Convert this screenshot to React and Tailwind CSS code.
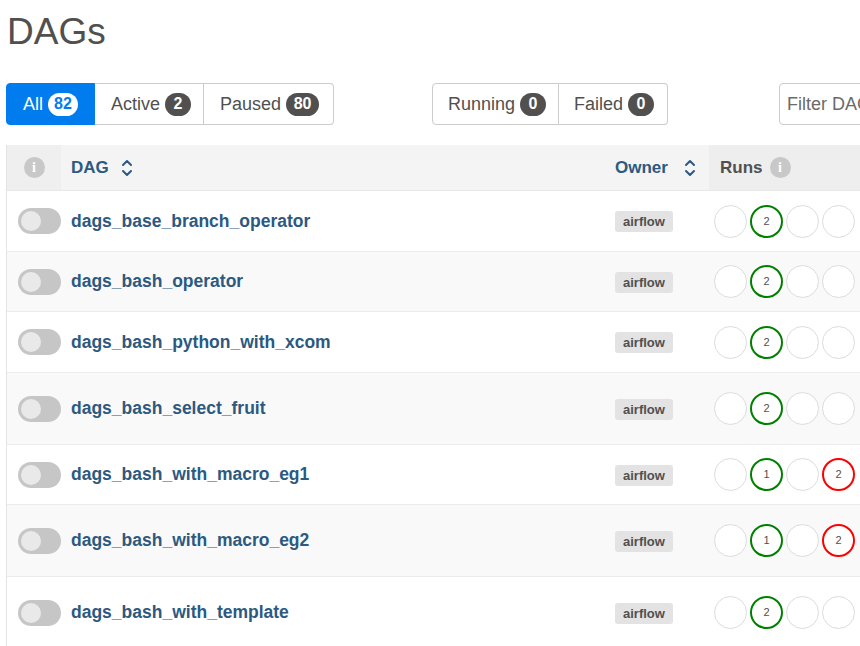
import React from "react";

const rows = [
  { name: "dags_base_branch_operator", h: "h-[61px]", runs: [null, ["g", 2], null, null] },
  { name: "dags_bash_operator", h: "h-[60px]", runs: [null, ["g", 2], null, null] },
  { name: "dags_bash_python_with_xcom", h: "h-[61px]", runs: [null, ["g", 2], null, null] },
  { name: "dags_bash_select_fruit", h: "h-[72px]", runs: [null, ["g", 2], null, null] },
  { name: "dags_bash_with_macro_eg1", h: "h-[60px]", runs: [null, ["g", 1], null, ["r", 2]] },
  { name: "dags_bash_with_macro_eg2", h: "h-[72px]", runs: [null, ["g", 1], null, ["r", 2]] },
  { name: "dags_bash_with_template", h: "h-[72px]", runs: [null, ["g", 2], null, null] },
];

function InfoIcon() {
  return (
    <span className="inline-flex items-center justify-center w-[21px] h-[21px] rounded-full bg-[#c8c8c8] text-white text-[14px] font-bold leading-none font-['Liberation_Serif',serif]">
      i
    </span>
  );
}

function SortIcon() {
  return (
    <svg width="12" height="20" viewBox="0 0 12 20" fill="none" stroke="#2d5981" strokeWidth="2" strokeLinecap="round" strokeLinejoin="round">
      <path d="M2 7 L6 3 L10 7" />
      <path d="M2 13 L6 17 L10 13" />
    </svg>
  );
}

function Toggle() {
  return (
    <div className="w-[43px] h-[26px] rounded-full bg-[#c6c6c6] flex items-center pl-[3px]">
      <div className="w-[20px] h-[20px] rounded-full bg-[#e9e9e9]"></div>
    </div>
  );
}

function Run({ r }) {
  if (!r) {
    return <div className="w-[33px] h-[33px] rounded-full border-[1.5px] border-[#dcdcdc] bg-white"></div>;
  }
  const border = r[0] === "g" ? "border-[#008000]" : "border-[#ff0000]";
  return (
    <div className={"w-[33px] h-[33px] rounded-full border-[2.5px] bg-white flex items-center justify-center text-[11px] text-[#51504f] " + border}>
      {r[1]}
    </div>
  );
}

function Badge({ children, light }) {
  return (
    <span
      className={
        "inline-flex items-center justify-center h-[23px] min-w-[26px] px-[8px] rounded-full text-[16px] font-bold leading-none " +
        (light ? "bg-white text-[#017cee]" : "bg-[#51504f] text-white")
      }
    >
      {children}
    </span>
  );
}

export default function App() {
  return (
    <div className="w-[860px] h-[646px] overflow-hidden bg-white font-['Liberation_Sans',Arial,sans-serif] text-[#51504f]">
      <div className="w-[1100px] pl-[6px]">
        <h2 className="text-[37px] leading-none pt-[13px] pl-[1px] h-[83px]">DAGs</h2>

        <div className="flex items-center h-[42px]">
          <div className="flex h-[42px] text-[18px]">
            <div className="flex items-center gap-[5px] px-[16px] bg-[#017cee] text-white rounded-l-[4px] border border-[#017cee] w-[89px]">
              <span>All</span>
              <Badge light>82</Badge>
            </div>
            <div className="flex items-center gap-[5px] pl-[16px] pr-[13px] border-y border-r border-[#cccccc] w-[109px]">
              <span>Active</span>
              <Badge>2</Badge>
            </div>
            <div className="flex items-center gap-[5px] pl-[16px] pr-[14px] border-y border-r border-[#cccccc] rounded-r-[4px] w-[130px]">
              <span>Paused</span>
              <Badge>80</Badge>
            </div>
          </div>

          <div className="flex h-[42px] text-[18px] ml-[98px]">
            <div className="flex items-center gap-[5px] pl-[15px] pr-[13px] border border-[#cccccc] rounded-l-[4px] w-[127px]">
              <span>Running</span>
              <Badge>0</Badge>
            </div>
            <div className="flex items-center gap-[5px] pl-[15px] pr-[13px] border-y border-r border-[#cccccc] rounded-r-[4px] w-[109px]">
              <span>Failed</span>
              <Badge>0</Badge>
            </div>
          </div>

          <div className="ml-[111px] h-[42px] w-[260px] border border-[#cccccc] rounded-[4px] flex items-center pl-[7px] text-[18px] text-[#6b6a69]">
            Filter DAGs
          </div>
        </div>

        <div className="mt-[20px] border-l border-[#e4e4e4]">
          <div className="flex h-[46px] bg-[#f4f4f4] border-b border-[#e8e8e8] text-[17px] font-bold">
            <div className="w-[54px] bg-[#efefef] flex items-center justify-center">
              <InfoIcon />
            </div>
            <div className="w-[544px] flex items-center gap-[12px] pl-[10px] text-[#2d5981]">
              <span>DAG</span>
              <SortIcon />
            </div>
            <div className="w-[104px] flex items-center gap-[16px] pl-[10px] text-[#2d5981]">
              <span>Owner</span>
              <SortIcon />
            </div>
            <div className="w-[200px] bg-[#eeeeee] flex items-center gap-[7px] pl-[11px] text-[#51504f]">
              <span>Runs</span>
              <InfoIcon />
            </div>
            <div className="flex-1"></div>
          </div>

          {rows.map((r, i) => (
            <div
              key={r.name}
              className={"flex items-center border-b border-[#ececec] " + r.h + " " + (i % 2 === 1 ? "bg-[#f9f9f9]" : "bg-white")}
            >
              <div className="w-[54px] flex items-center pl-[11px]">
                <Toggle />
              </div>
              <div className="w-[544px] pl-[10px] text-[17.5px] font-bold text-[#2d5981]">{r.name}</div>
              <div className="w-[104px] pl-[10px]">
                <span className="inline-flex items-center h-[21px] px-[8px] rounded-[3px] bg-[#e3e3e3] text-[13px] font-bold text-[#51504f]">
                  airflow
                </span>
              </div>
              <div className="flex items-center gap-[3px] pl-[5px]">
                {r.runs.map((x, j) => (
                  <Run key={j} r={x} />
                ))}
              </div>
            </div>
          ))}
        </div>
      </div>
    </div>
  );
}
